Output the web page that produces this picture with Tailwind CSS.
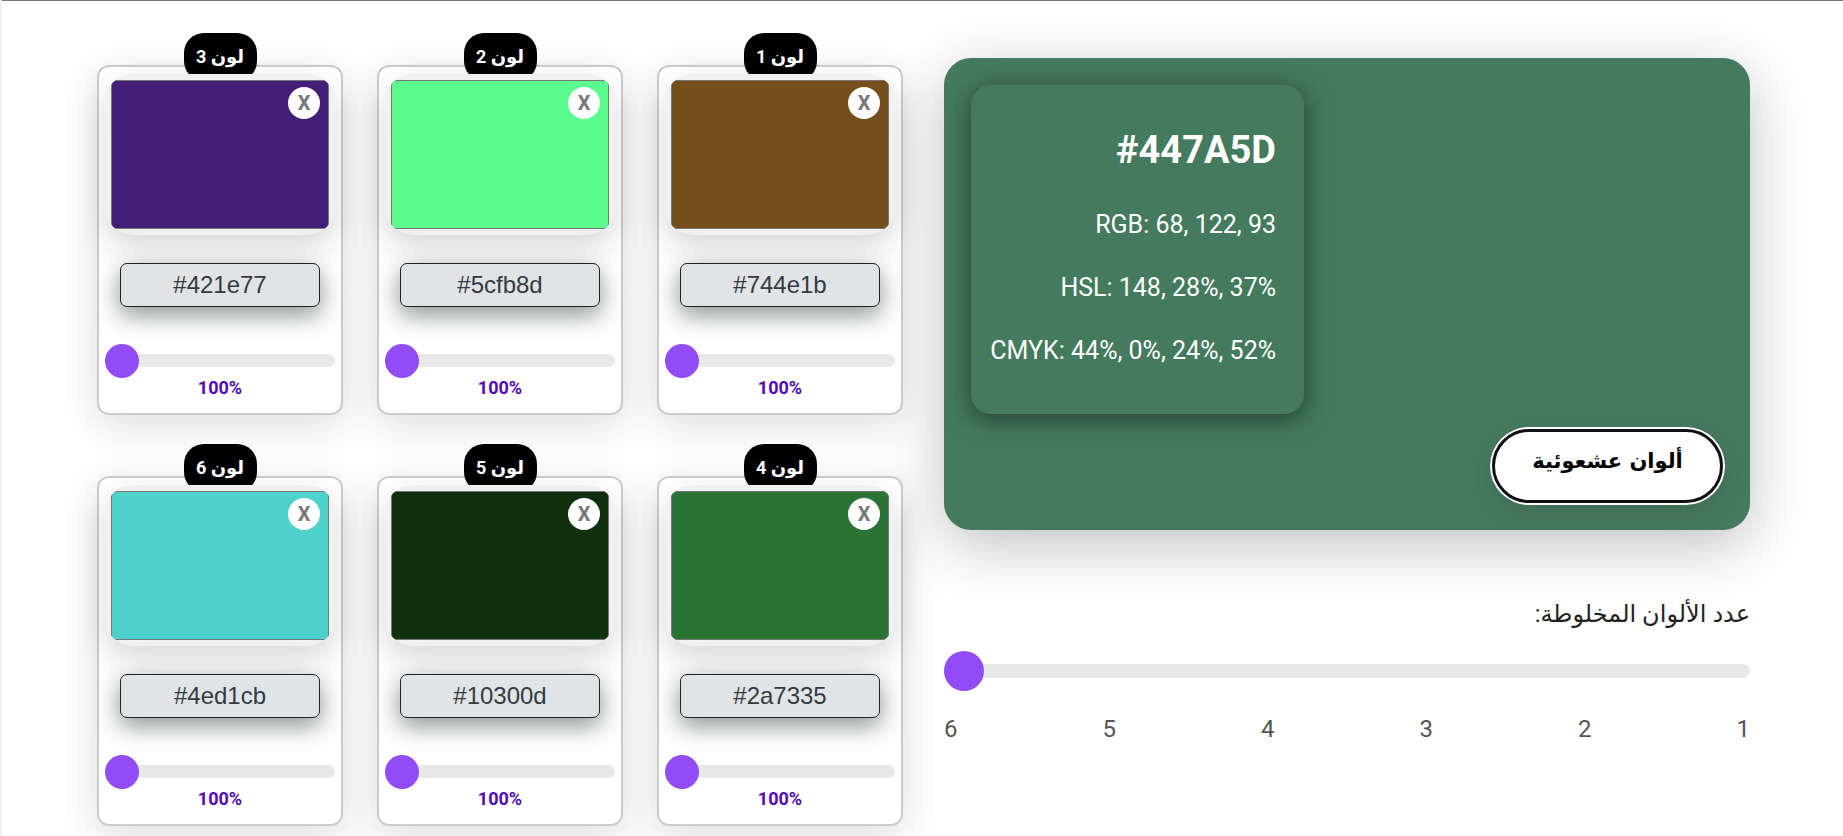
<!DOCTYPE html>
<html lang="ar" dir="rtl">
<head>
<meta charset="utf-8">
<title>خلط الألوان</title>
<script src="https://cdn.jsdelivr.net/npm/@tailwindcss/browser@4"></script>
</head>
<body class="bg-[#eeeeee] pl-[2px] font-[Roboto,'DejaVu_Sans',sans-serif] text-[#222]">
<main class="grid min-h-screen grid-cols-2 items-start gap-[41px] overflow-hidden border-t border-[#7a7290] bg-white pt-[57px] pr-[93px] pb-2.5 pl-[95px]">

  <!-- Mixed colour and its controls -->
  <section>
    <div class="flex min-h-[472px] items-end justify-between rounded-[27px] bg-[#447a5d] p-[27px] shadow-[0_15px_60px_rgba(0,0,0,0.25)]">
      <button type="button" class="h-[74px] w-[231px] rounded-full border-[3px] border-[#111] bg-white pb-2 font-['DejaVu_Sans',sans-serif] text-[21px] font-bold text-black shadow-[0_0_0_2px_#fff,0_10px_20px_rgba(60,60,60,0.2)]">ألوان عشعوئية</button>
      <div class="w-[333px] self-start rounded-[20px] bg-[#447a5d] px-7 pt-9 pb-8 text-white shadow-[0_5px_25px_rgba(0,0,0,0.5)]">
        <h2 dir="ltr" class="mb-3.5 text-right text-[38px] leading-[58px] font-bold">#447A5D</h2>
        <p dir="ltr" class="text-right text-[25px] leading-[63px] whitespace-nowrap">RGB: 68, 122, 93</p>
        <p dir="ltr" class="text-right text-[25px] leading-[63px] whitespace-nowrap">HSL: 148, 28%, 37%</p>
        <p dir="ltr" class="-ml-4 text-right text-[25px] leading-[63px] whitespace-nowrap">CMYK: 44%, 0%, 24%, 52%</p>
      </div>
    </div>
    <label for="count" class="mt-16 block text-[24px] leading-10">عدد الألوان المخلوطة:</label>
    <input id="count" type="range" min="1" max="6" value="6" class="mt-[17px] block h-10 w-full appearance-none bg-transparent [&::-webkit-slider-runnable-track]:h-3.5 [&::-webkit-slider-runnable-track]:rounded-full [&::-webkit-slider-runnable-track]:bg-[#e8e8e8] [&::-webkit-slider-thumb]:-mt-[13px] [&::-webkit-slider-thumb]:size-10 [&::-webkit-slider-thumb]:appearance-none [&::-webkit-slider-thumb]:rounded-full [&::-webkit-slider-thumb]:bg-[#914cf5]">
    <div class="mt-[22px] flex justify-between text-[24px] leading-8 text-[#555]">
      <span>1</span><span>2</span><span>3</span><span>4</span><span>5</span><span>6</span>
    </div>
  </section>

  <!-- Source colours -->
  <section id="cards" class="grid grid-cols-3 gap-x-[34px] gap-y-[61px] pt-[7px]"></section>
</main>

<template id="card">
  <article class="relative rounded-xl border-2 border-[#ccc] bg-white px-1.5 pt-[7px] pb-[15px] shadow-[0_10px_40px_rgba(0,0,0,0.14)]">
    <div class="absolute inset-x-0 -top-[34px] h-[41px] overflow-hidden">
      <h3 class="mx-auto h-12 w-[73px] rounded-[20px] bg-black pt-2.5 text-center text-[18px] leading-7 font-bold whitespace-nowrap text-white"></h3>
    </div>
    <input type="color" class="block h-[161px] w-full appearance-none rounded-[28px] bg-[#f0f0f0] p-1.5 shadow-[0_12px_30px_rgba(0,0,0,0.16)] [&::-webkit-color-swatch]:rounded-[5px] [&::-webkit-color-swatch]:border [&::-webkit-color-swatch]:border-[#777] [&::-webkit-color-swatch-wrapper]:p-0">
    <button type="button" class="absolute top-5 right-[21px] size-8 rounded-full bg-white text-[20px] leading-8 font-bold text-[#777]">X</button>
    <div class="px-[15px]">
      <input type="text" dir="ltr" class="mt-7 block h-11 w-full rounded-[7px] border border-[#222] bg-[#e0e4e7] text-center font-['Liberation_Sans',sans-serif] text-[24px] text-[#333b40] shadow-[0_8px_24px_rgba(20,35,30,0.5)]">
    </div>
    <input type="range" min="0" max="100" value="100" class="mt-9 mb-px block h-[34px] w-full appearance-none bg-transparent [&::-webkit-slider-runnable-track]:h-[13px] [&::-webkit-slider-runnable-track]:rounded-full [&::-webkit-slider-runnable-track]:bg-[#e8e8e8] [&::-webkit-slider-thumb]:-mt-2.5 [&::-webkit-slider-thumb]:size-[34px] [&::-webkit-slider-thumb]:appearance-none [&::-webkit-slider-thumb]:rounded-full [&::-webkit-slider-thumb]:bg-[#914cf5]">
    <p dir="ltr" class="text-center text-[18px] leading-5 font-bold text-[#520bb3]">100%</p>
  </article>
</template>

<script>
  const colors = ['#744e1b', '#5cfb8d', '#421e77', '#2a7335', '#10300d', '#4ed1cb'];
  const list = document.getElementById('cards');
  const template = document.getElementById('card');
  colors.forEach((color, i) => {
    const card = template.content.cloneNode(true);
    const name = 'لون ' + (i + 1);
    card.querySelector('h3').textContent = name;
    card.querySelector('[type=color]').value = color;
    card.querySelector('[type=text]').value = color;
    card.querySelectorAll('input').forEach(el => el.setAttribute('aria-label', name));
    card.querySelector('button').setAttribute('aria-label', 'X ' + name);
    list.append(card);
  });
</script>
</body>
</html>
